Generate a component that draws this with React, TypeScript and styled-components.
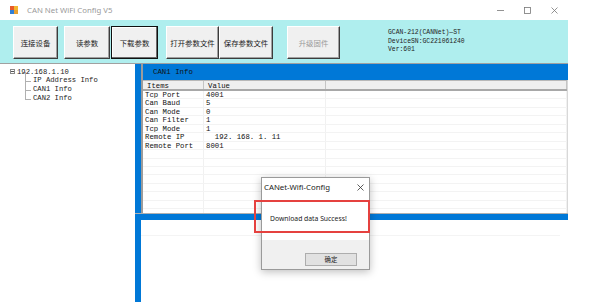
import React from "react";
import styled, { createGlobalStyle } from "styled-components";

const GlobalStyle = createGlobalStyle`
  html, body {
    margin: 0;
    padding: 0;
    background: #ffffff;
  }
`;

const Window = styled.div`
  position: relative;
  width: 592px;
  height: 302px;
  overflow: hidden;
  background: #ffffff;
  font-family: "Noto Sans", "Noto Sans CJK SC", sans-serif;
`;

const TitleBar = styled.div`
  height: 20px;
  display: flex;
  align-items: center;
  padding-left: 10px;
  width: 568px;
  box-sizing: border-box;
`;

const TitleText = styled.span`
  margin-left: 9px;
  font-size: 7.8px;
  color: #9a9a9a;
`;

const Controls = styled.div`
  margin-left: auto;
  display: flex;
  align-items: center;
  gap: 20px;
  padding-right: 10px;
`;

const Toolbar = styled.div`
  width: 568px;
  height: 44px;
  box-sizing: border-box;
  background: #afeeee;
  border-bottom: 1px solid #a0a0a0;
  display: flex;
  align-items: flex-start;
  padding: 6px 0 0 13px;
`;

const ToolButton = styled.button<{ $w: number; $ml?: number; $active?: boolean; $disabled?: boolean }>`
  width: ${(p) => p.$w}px;
  height: 33px;
  margin-left: ${(p) => p.$ml ?? 0}px;
  padding: 0;
  background: #f0f0f0;
  font-family: "Noto Sans CJK SC", sans-serif;
  font-size: 7.4px;
  color: ${(p) => (p.$disabled ? "#9a9a9a" : "#222")};
  border: 1px solid;
  border-color: ${(p) => (p.$active ? "#101010" : "#ffffff #3c3c3c #3c3c3c #ffffff")};
  box-shadow: ${(p) =>
    p.$active ? "inset -1px -1px #6a6a6a, inset 1px 1px #ffffff" : "inset -1px -1px #a0a0a0"};
  box-sizing: border-box;
`;

const DeviceInfo = styled.div`
  margin: 3px 0 0 48px;
  font-family: "Liberation Mono", monospace;
  font-size: 6.4px;
  line-height: 8.5px;
  color: #222;
  white-space: pre;
`;

const Main = styled.div`
  display: flex;
  height: 238px;
`;

const TreePanel = styled.div`
  width: 135px;
  padding: 3px 0 0 10px;
  box-sizing: border-box;
  font-family: "Liberation Mono", monospace;
  font-size: 7.2px;
  color: #222;
`;

const TreeRoot = styled.div`
  display: flex;
  align-items: center;
  height: 9px;
`;

const ToggleBox = styled.span`
  position: relative;
  width: 5px;
  height: 5px;
  border: 1px solid #888;
  box-sizing: border-box;
  margin-right: 2px;
  &::after {
    content: "";
    position: absolute;
    left: 0;
    right: 0;
    top: 1px;
    height: 1px;
    background: #555;
  }
`;

const TreeChildren = styled.div`
  margin-left: 15px;
`;

const TreeItem = styled.div<{ $last?: boolean }>`
  position: relative;
  height: 9px;
  line-height: 9px;
  padding-left: 8px;
  &::before {
    content: "";
    position: absolute;
    left: 0;
    top: -4.5px;
    height: ${(p) => (p.$last ? 9 : 13.5)}px;
    border-left: 1px solid #b0b0b0;
  }
  &::after {
    content: "";
    position: absolute;
    left: 0;
    top: 4.5px;
    width: 6px;
    border-top: 1px solid #b0b0b0;
  }
`;

const RightPanel = styled.div`
  width: 433px;
  box-sizing: border-box;
  border-left: 6px solid #0078d7;
  display: flex;
  flex-direction: column;
`;

const Upper = styled.div`
  border-left: 2px solid #9c9c9c;
  display: flex;
  flex-direction: column;
`;

const PanelHeader = styled.div`
  height: 16px;
  background: #0078d7;
  padding-left: 10px;
  display: flex;
  align-items: center;
  font-family: "Liberation Mono", monospace;
  font-size: 7.4px;
  color: #111;
`;

const ListView = styled.div`
  height: 133px;
  background: #fff;
  border-right: 1px solid #d8d8d8;
  overflow: hidden;
  font-family: "Liberation Mono", monospace;
  font-size: 7.3px;
  color: #111;
`;

const Row = styled.div<{ $head?: boolean }>`
  display: grid;
  grid-template-columns: 61px 122px 1fr;
  height: ${(p) => (p.$head ? 11 : 8.45)}px;
  line-height: ${(p) => (p.$head ? 11 : 8.45)}px;
  background: ${(p) => (p.$head ? "#efefef" : "#fff")};
  border-top: ${(p) => (p.$head ? "1px solid #b8b8b8" : "none")};
  border-bottom: ${(p) => (p.$head ? "2px solid #a8a8a8" : "1px solid #f3f3f3")};
  box-sizing: border-box;
`;

const Cell = styled.div<{ $head?: boolean }>`
  padding-left: ${(p) => (p.$head ? 4 : 2)}px;
  border-right: 1px solid ${(p) => (p.$head ? "#c4c4c4" : "#f1f1f1")};
  white-space: pre;
  overflow: hidden;
`;

const BlueBar = styled.div`
  height: 6px;
  margin-left: -6px;
  background: #0078d7;
  border-top: 1px solid #b0b0b0;
`;

const BottomPane = styled.div`
  flex: 1;
  background: #fff;
  padding-top: 15px;
`;

const FaintLine = styled.div`
  border-top: 1px solid #f4f4f4;
  margin-right: 8px;
`;

const Dialog = styled.div`
  position: absolute;
  left: 261px;
  top: 177px;
  width: 109px;
  height: 93px;
  box-sizing: border-box;
  background: #f0f0f0;
  border: 1px solid #9a9a9a;
  box-shadow: 0 2px 8px rgba(0, 0, 0, 0.25);
  display: flex;
  flex-direction: column;
`;

const DialogTop = styled.div`
  height: 62px;
  background: #fff;
`;

const DialogTitle = styled.div`
  height: 18px;
  display: flex;
  align-items: center;
  justify-content: space-between;
  padding: 0 5px 0 2px;
  font-size: 7.8px;
  color: #222;
`;

const DialogMessage = styled.div`
  padding: 18px 0 0 8px;
  font-size: 6.8px;
  color: #222;
`;

const DialogBottom = styled.div`
  flex: 1;
  padding: 5px 0 0 43px;
`;

const OkButton = styled.button`
  width: 52px;
  height: 13px;
  padding: 0;
  background: #e1e1e1;
  border: 1px solid #adadad;
  font-family: "Noto Sans CJK SC", sans-serif;
  font-size: 6.4px;
  color: #222;
  box-sizing: border-box;
`;

const Highlight = styled.div`
  position: absolute;
  left: 254px;
  top: 200px;
  width: 116px;
  height: 33px;
  box-sizing: border-box;
  border: 2px solid #e5413f;
`;

const rows: [string, string][] = [
  ["Tcp Port", "4001"],
  ["Can Baud", "5"],
  ["Can Mode", "0"],
  ["Can Filter", "1"],
  ["Tcp Mode", "1"],
  ["Remote IP", "  192. 168. 1. 11"],
  ["Remote Port", "8001"],
];

const AppIcon = () => (
  <svg width="8" height="8" viewBox="0 0 8 8">
    <rect x="0" y="0" width="4" height="4" fill="#e85a2a" />
    <rect x="4" y="0" width="4" height="4" fill="#f2b630" />
    <rect x="0" y="4" width="4" height="4" fill="#2f7fd8" />
    <rect x="4" y="4" width="4" height="4" fill="#e8a030" />
  </svg>
);

const App = () => {
  return (
    <Window>
      <GlobalStyle />
      <TitleBar>
        <AppIcon />
        <TitleText>CAN Net WiFi Config V5</TitleText>
        <Controls>
          <svg width="7" height="7" viewBox="0 0 7 7">
            <line x1="0" y1="3.5" x2="7" y2="3.5" stroke="#777" strokeWidth="0.8" />
          </svg>
          <svg width="7" height="7" viewBox="0 0 7 7">
            <rect x="0.5" y="0.5" width="6" height="6" fill="none" stroke="#777" strokeWidth="0.8" />
          </svg>
          <svg width="7" height="7" viewBox="0 0 7 7">
            <path d="M0.5 0.5 L6.5 6.5 M6.5 0.5 L0.5 6.5" stroke="#777" strokeWidth="0.8" />
          </svg>
        </Controls>
      </TitleBar>

      <Toolbar>
        <ToolButton $w={45}>连接设备</ToolButton>
        <ToolButton $w={46} $ml={6}>读参数</ToolButton>
        <ToolButton $w={47} $ml={1} $active>下载参数</ToolButton>
        <ToolButton $w={53} $ml={8}>打开参数文件</ToolButton>
        <ToolButton $w={54}>保存参数文件</ToolButton>
        <ToolButton $w={53} $ml={14} $disabled>升级固件</ToolButton>
        <DeviceInfo>
          {"GCAN-212(CANNet)—ST\nDeviceSN:GC221061240\nVer:601"}
        </DeviceInfo>
      </Toolbar>

      <Main>
        <TreePanel>
          <TreeRoot>
            <ToggleBox />
            192.168.1.10
          </TreeRoot>
          <TreeChildren>
            <TreeItem>IP Address Info</TreeItem>
            <TreeItem>CAN1 Info</TreeItem>
            <TreeItem $last>CAN2 Info</TreeItem>
          </TreeChildren>
        </TreePanel>

        <RightPanel>
          <Upper>
            <PanelHeader>CAN1 Info</PanelHeader>
            <ListView>
              <Row $head>
                <Cell $head>Items</Cell>
                <Cell $head>Value</Cell>
                <Cell $head />
              </Row>
              {rows.map(([k, v]) => (
                <Row key={k}>
                  <Cell>{k}</Cell>
                  <Cell>{v}</Cell>
                  <Cell />
                </Row>
              ))}
              {Array.from({ length: 8 }).map((_, i) => (
                <Row key={"e" + i}>
                  <Cell />
                  <Cell />
                  <Cell />
                </Row>
              ))}
            </ListView>
          </Upper>
          <BlueBar />
          <BottomPane>
            <FaintLine />
          </BottomPane>
        </RightPanel>
      </Main>

      <Dialog>
        <DialogTop>
          <DialogTitle>
            <span>CANet-Wifi-Config</span>
            <svg width="7" height="7" viewBox="0 0 7 7">
              <path d="M0.5 0.5 L6.5 6.5 M6.5 0.5 L0.5 6.5" stroke="#333" strokeWidth="0.8" />
            </svg>
          </DialogTitle>
          <DialogMessage>Download data Success!</DialogMessage>
        </DialogTop>
        <DialogBottom>
          <OkButton>确定</OkButton>
        </DialogBottom>
      </Dialog>
      <Highlight />
    </Window>
  );
};

export default App;
